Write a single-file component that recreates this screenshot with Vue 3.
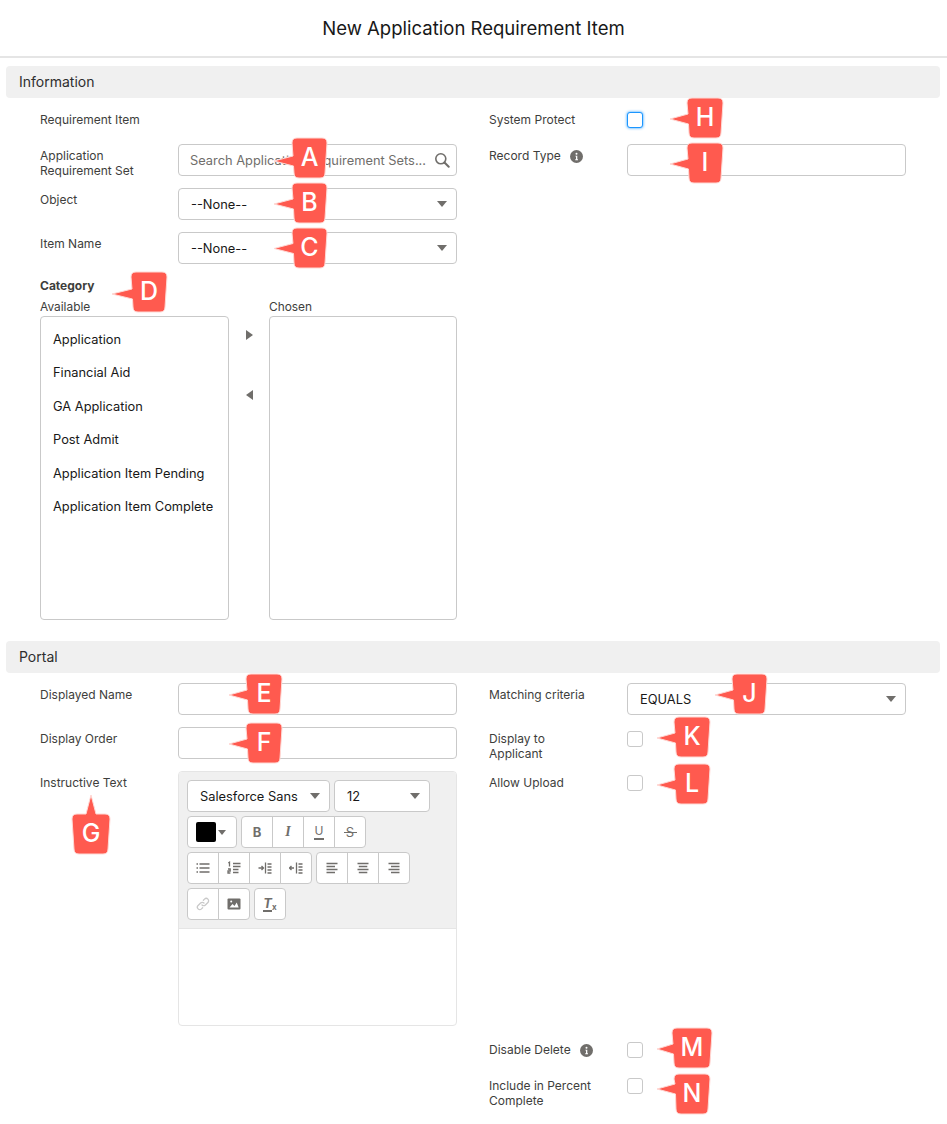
<script setup>
const categories = [
  'Application',
  'Financial Aid',
  'GA Application',
  'Post Admit',
  'Application Item Pending',
  'Application Item Complete',
]

const listIcons = [
  'M0.5 3h1.5M0.5 7h1.5M0.5 11h1.5M3.5 3h10M3.5 7h10M3.5 11h10',
  'M1.3 2l1.2-.8V5.5M1 8h2.2v2H1v2h2.4M6 2.5h7.5M6 5.5h7.5M6 8.5h5.5M6 11.5h5.5',
  'M0.5 7h4.5M3.5 5l2 2-2 2M7.5 1.5v11M9.5 3h4M9.5 6h4M9.5 9h4M9.5 12h4',
  'M0.5 7h4.5M2.5 5L.5 7l2 2M7.5 1.5v11M9.5 3h4M9.5 6h4M9.5 9h4M9.5 12h4',
]
const alignIcons = [
  'M1.5 2.5h11M1.5 5.5h8.5M1.5 8.5h11M1.5 11.5h8.5',
  'M1.5 2.5h11M2.8 5.5h8.5M1.5 8.5h11M2.8 11.5h8.5',
  'M1.5 2.5h11M4 5.5h8.5M1.5 8.5h11M4 11.5h8.5',
]

function shape(c) {
  const { l, r, t, b, tx, ty } = c
  const ins = 2
  const rad = 5
  const bl = l + ins
  const br = r - ins
  if (c.up) {
    return `M${l + rad} ${t}L${tx - 5} ${t}L${tx} ${ty}L${tx + 5} ${t}L${r - rad} ${t}Q${r} ${t} ${r} ${t + rad}L${br} ${b - rad}Q${br} ${b} ${br - rad} ${b}L${bl + rad} ${b}Q${bl} ${b} ${bl} ${b - rad}L${l} ${t + rad}Q${l} ${t} ${l + rad} ${t}Z`
  }
  return `M${l + rad} ${t}L${r - rad} ${t}Q${r} ${t} ${r} ${t + rad}L${br} ${b - rad}Q${br} ${b} ${br - rad} ${b}L${bl + rad} ${b}Q${bl} ${b} ${bl} ${b - rad}L${l + 1.5} ${ty + 5}L${tx} ${ty}L${l + 1} ${ty - 5}L${l} ${t + rad}Q${l} ${t} ${l + rad} ${t}Z`
}

const callouts = [
  { k: 'A', l: 292, r: 327, t: 138, b: 178, tx: 274, ty: 161 },
  { k: 'B', l: 292, r: 327, t: 183, b: 223, tx: 274, ty: 204 },
  { k: 'C', l: 292, r: 327, t: 228, b: 268, tx: 274, ty: 248.5 },
  { k: 'D', l: 131, r: 167, t: 272, b: 312, tx: 112, ty: 294 },
  { k: 'E', l: 246, r: 282, t: 674, b: 714, tx: 229, ty: 695 },
  { k: 'F', l: 246, r: 282, t: 723, b: 763, tx: 229, ty: 744 },
  { k: 'G', l: 72, r: 110, t: 814, b: 854, tx: 91, ty: 795, up: true },
  { k: 'H', l: 687, r: 723, t: 98, b: 138, tx: 670, ty: 119 },
  { k: 'I', l: 687, r: 723, t: 143, b: 183, tx: 670, ty: 164 },
  { k: 'J', l: 732, r: 767, t: 674, b: 714, tx: 715, ty: 695 },
  { k: 'K', l: 674, r: 710, t: 717, b: 757, tx: 657, ty: 738 },
  { k: 'L', l: 674, r: 710, t: 764, b: 804, tx: 657, ty: 785 },
  { k: 'M', l: 672, r: 712, t: 1028, b: 1068, tx: 657, ty: 1049 },
  { k: 'N', l: 674, r: 710, t: 1074, b: 1114, tx: 657, ty: 1089 },
].map((c) => ({ ...c, d: shape(c), cx: (c.l + c.r) / 2, base: (c.t + c.b) / 2 + 8 }))
</script>

<template>
  <div class="page">
    <header class="title-bar"><h1>New Application Requirement Item</h1></header>

    <section class="section">
      <h2 class="section-head">Information</h2>
      <div class="grid info">
        <div class="field short"><span class="label">Requirement Item</span></div>
        <div class="field short">
          <span class="label">System Protect</span>
          <input class="check focused" type="checkbox" />
        </div>

        <div class="field">
          <span class="label">Application Requirement Set</span>
          <div class="box search">
            <input class="bare" placeholder="Search Application Requirement Sets..." />
            <svg class="search-icon" width="16" height="16" viewBox="0 0 16 16" fill="none" stroke="#706e6b" stroke-width="1.6">
              <circle cx="6.8" cy="6.8" r="5" />
              <path d="M10.5 10.5l4.2 4.2" stroke-linecap="round" stroke-width="2" />
            </svg>
          </div>
        </div>
        <div class="field">
          <span class="label with-info">Record Type
            <svg class="info-icon" width="13" height="13" viewBox="0 0 13 13">
              <circle cx="6.5" cy="6.5" r="6.5" fill="#706e6b" />
              <circle cx="6.5" cy="3.8" r="1" fill="#fff" />
              <path d="M5.4 5.7h1.9v3.6h.7v.9H5.2v-.9h.8V6.6h-.6z" fill="#fff" />
            </svg>
          </span>
          <input class="box text" />
        </div>

        <div class="field col1">
          <span class="label">Object</span>
          <div class="box select"><span>--None--</span><i class="caret"></i></div>
        </div>
        <div class="field col1">
          <span class="label">Item Name</span>
          <div class="box select"><span>--None--</span><i class="caret"></i></div>
        </div>

        <div class="picker col1">
          <div class="picker-title">Category</div>
          <div class="picker-cols">
            <div class="picker-col left">
              <div class="picker-label">Available</div>
              <ul class="listbox">
                <li v-for="c in categories" :key="c">{{ c }}</li>
              </ul>
            </div>
            <div class="picker-arrows">
              <i class="tri right"></i>
              <i class="tri back"></i>
            </div>
            <div class="picker-col">
              <div class="picker-label">Chosen</div>
              <ul class="listbox"></ul>
            </div>
          </div>
        </div>
      </div>
    </section>

    <section class="section">
      <h2 class="section-head">Portal</h2>
      <div class="grid portal">
        <div class="field">
          <span class="label">Displayed Name</span>
          <input class="box text" />
        </div>
        <div class="field">
          <span class="label">Matching criteria</span>
          <div class="box select"><span>EQUALS</span><i class="caret"></i></div>
        </div>

        <div class="field">
          <span class="label">Display Order</span>
          <input class="box text" />
        </div>
        <div class="field">
          <span class="label narrow">Display to Applicant</span>
          <input class="check" type="checkbox" />
        </div>

        <div class="field editor-field">
          <span class="label">Instructive Text</span>
          <div class="editor">
            <div class="toolbar">
              <div class="tool-row">
                <div class="tool-select font"><span>Salesforce Sans</span><i class="caret"></i></div>
                <div class="tool-select size"><span>12</span><i class="caret"></i></div>
              </div>
              <div class="tool-row">
                <div class="tool-btn swatch-btn"><i class="swatch"></i><i class="caret small"></i></div>
                <div class="tool-group">
                  <span class="tool-btn t-b">B</span>
                  <span class="tool-btn t-i">I</span>
                  <span class="tool-btn t-u">U</span>
                  <span class="tool-btn t-s">S</span>
                </div>
              </div>
              <div class="tool-row">
                <div class="tool-group">
                  <span v-for="d in listIcons" :key="d" class="tool-btn">
                    <svg width="14" height="14" viewBox="0 0 14 14" fill="none" stroke="#706e6b" stroke-width="1.3"><path :d="d" /></svg>
                  </span>
                </div>
                <div class="tool-group">
                  <span v-for="d in alignIcons" :key="d" class="tool-btn">
                    <svg width="14" height="14" viewBox="0 0 14 14" fill="none" stroke="#706e6b" stroke-width="1.5"><path :d="d" /></svg>
                  </span>
                </div>
              </div>
              <div class="tool-row">
                <div class="tool-group">
                  <span class="tool-btn">
                    <svg width="14" height="14" viewBox="0 0 14 14" fill="none" stroke="#c9c9c9" stroke-width="1.3" stroke-linecap="round">
                      <path d="M6 8a2.4 2.4 0 0 0 3.4 0l2.5-2.5a2.4 2.4 0 0 0-3.4-3.4L7.4 3.2" />
                      <path d="M8 6a2.4 2.4 0 0 0-3.4 0L2.1 8.5a2.4 2.4 0 0 0 3.4 3.4l1.1-1.1" />
                    </svg>
                  </span>
                  <span class="tool-btn">
                    <svg width="14" height="14" viewBox="0 0 14 14">
                      <rect x="0.5" y="1.5" width="13" height="11" rx="1" fill="#706e6b" />
                      <path d="M2.5 10.5l3-3.5 2 2 2.2-3.5 2 5z" fill="#fff" />
                      <circle cx="4.2" cy="4.6" r="1" fill="#fff" />
                    </svg>
                  </span>
                </div>
                <div class="tool-group">
                  <span class="tool-btn t-clear">T<small>x</small></span>
                </div>
              </div>
            </div>
            <div class="editor-area"></div>
          </div>
        </div>
        <div class="field">
          <span class="label">Allow Upload</span>
          <input class="check" type="checkbox" />
        </div>

        <div class="field short col2">
          <span class="label with-info delete">Disable Delete
            <svg class="info-icon" width="13" height="13" viewBox="0 0 13 13">
              <circle cx="6.5" cy="6.5" r="6.5" fill="#706e6b" />
              <circle cx="6.5" cy="3.8" r="1" fill="#fff" />
              <path d="M5.4 5.7h1.9v3.6h.7v.9H5.2v-.9h.8V6.6h-.6z" fill="#fff" />
            </svg>
          </span>
          <input class="check" type="checkbox" />
        </div>
        <div class="field short col2">
          <span class="label narrow wide">Include in Percent Complete</span>
          <input class="check" type="checkbox" />
        </div>
      </div>
    </section>

    <svg class="callouts" width="947" height="1124" viewBox="0 0 947 1124">
      <g v-for="c in callouts" :key="c.k">
        <path :d="c.d" fill="#ff5a4f" stroke="#ffd9d5" stroke-width="1" stroke-linejoin="round" />
        <text :x="c.cx" :y="c.base" text-anchor="middle" class="callout-letter">{{ c.k }}</text>
      </g>
    </svg>
  </div>
</template>

<style>
html, body { margin: 0; background: #fff; }
</style>

<style scoped>
.page {
  position: relative;
  width: 947px;
  height: 1124px;
  overflow: hidden;
  font-family: Inter, "Liberation Sans", sans-serif;
  color: #181818;
  background: #fff;
}
.title-bar {
  height: 56px;
  display: flex;
  align-items: center;
  justify-content: center;
  border-bottom: 2px solid #e5e5e5;
  margin-bottom: 8px;
}
.title-bar h1 {
  margin: 0;
  font-size: 18.55px;
  font-weight: 400;
  line-height: 24px;
}
.section { margin: 0 7px 0 6px; }
.section-head {
  margin: 0;
  height: 32px;
  line-height: 32px;
  padding-left: 13px;
  background: #f0f0f0;
  border-radius: 4px;
  font-size: 14px;
  font-weight: 400;
  color: #2e2e2e;
}
.grid {
  display: grid;
  grid-template-columns: 417px 417px;
  column-gap: 32px;
  row-gap: 12px;
  margin-left: 34px;
  padding-top: 10px;
  align-items: start;
}
.info { padding-bottom: 21px; }
.col1 { grid-column: 1; }
.col2 { grid-column: 2; }
.field {
  display: grid;
  grid-template-columns: 138px 279px;
  min-height: 32px;
  align-items: start;
}
.field.short { min-height: 24px; }
.label {
  display: block;
  padding-top: 4px;
  margin-bottom: -4px;
  width: 110px;
  font-size: 12px;
  line-height: 15px;
  color: #3e3e3c;
}
.label.narrow { width: 100px; }
.label.wide { width: 120px; }
.with-info {
  display: flex;
  gap: 9px;
  width: 130px;
  white-space: nowrap;
}
.info-icon { flex: none; margin-top: 2px; }
.box {
  box-sizing: border-box;
  width: 279px;
  height: 32px;
  border: 1px solid #c9c9c9;
  border-radius: 4px;
  background: #fff;
  font: 12.85px/30px Inter, "Liberation Sans", sans-serif;
  color: #181818;
  outline: none;
}
.text { padding: 0 11px; }
.search { display: flex; align-items: center; padding: 1px 6px 0 11px; gap: 8px; }
.bare {
  flex: 1;
  min-width: 0;
  border: 0;
  padding: 0;
  outline: none;
  font: inherit;
  background: transparent;
  text-overflow: ellipsis;
}
.bare::placeholder { color: #706e6b; opacity: 1; }
.search-icon { flex: none; margin-top: -1px; }
.select {
  display: flex;
  align-items: center;
  justify-content: space-between;
  padding: 0 9px 0 12px;
}
.select span { padding-top: 1px; }
.caret {
  display: block;
  width: 0;
  height: 0;
  border-left: 5px solid transparent;
  border-right: 5px solid transparent;
  border-top: 6px solid #706e6b;
}
.caret.small { border-left-width: 4px; border-right-width: 4px; border-top-width: 5px; }
.check {
  appearance: none;
  -webkit-appearance: none;
  box-sizing: border-box;
  display: block;
  width: 16px;
  height: 16px;
  margin: 4px 0 0;
  border: 1px solid #c9c9c9;
  border-radius: 3px;
  background: #fff;
  outline: none;
}
.check.focused {
  border-color: #1b96ff;
  box-shadow: 0 0 3px #1b96ff;
}
.picker { margin-top: 2px; width: 417px; }
.picker-title {
  font-size: 12px;
  font-weight: 700;
  line-height: 15px;
  color: #3e3e3c;
  margin-bottom: 6px;
}
.picker-cols { display: flex; }
.picker-col { width: 188px; }
.picker-col.left { width: 189px; }
.picker-label {
  font-size: 11.9px;
  line-height: 15px;
  color: #3e3e3c;
  margin-bottom: 2px;
}
.listbox {
  box-sizing: border-box;
  height: 304px;
  margin: 0;
  padding: 6px 0 0 12px;
  list-style: none;
  border: 1px solid #c9c9c9;
  border-radius: 4px;
  font-size: 12.85px;
}
.listbox li {
  height: 33.4px;
  line-height: 33.4px;
  white-space: nowrap;
}
.picker-arrows {
  width: 40px;
  padding: 31px 0 0 17px;
  box-sizing: border-box;
  display: flex;
  flex-direction: column;
  gap: 50px;
}
.tri {
  display: block;
  width: 0;
  height: 0;
  border-top: 5px solid transparent;
  border-bottom: 5px solid transparent;
}
.tri.right { border-left: 7px solid #706e6b; }
.tri.back { border-right: 7px solid #706e6b; }
.editor {
  box-sizing: border-box;
  width: 279px;
  height: 255px;
  border: 1px solid #e5e5e5;
  border-radius: 4px;
  overflow: hidden;
  background: #fff;
  display: flex;
  flex-direction: column;
}
.toolbar {
  background: #f0f0f0;
  padding: 8px;
  display: flex;
  flex-direction: column;
  gap: 4px;
  border-bottom: 1px solid #e5e5e5;
}
.tool-row { display: flex; gap: 4px; height: 32px; }
.tool-select {
  box-sizing: border-box;
  display: flex;
  align-items: center;
  justify-content: space-between;
  height: 32px;
  padding: 0 9px 0 12px;
  border: 1px solid #c9c9c9;
  border-radius: 4px;
  background: #fff;
  font-size: 12.85px;
}
.tool-select.font { width: 143px; }
.tool-select.size { width: 96px; }
.tool-group { display: flex; }
.tool-btn {
  position: relative;
  box-sizing: border-box;
  display: flex;
  align-items: center;
  justify-content: center;
  width: 32px;
  height: 32px;
  margin-left: -1px;
  border: 1px solid #c9c9c9;
  background: #fff;
  color: #706e6b;
  font-size: 13px;
}
.tool-group .tool-btn:first-child { margin-left: 0; border-radius: 4px 0 0 4px; }
.tool-group .tool-btn:last-child { border-radius: 0 4px 4px 0; }
.tool-group .tool-btn:only-child { border-radius: 4px; }
.swatch-btn {
  width: 50px;
  margin-left: 0;
  border-radius: 4px;
  gap: 2px;
  justify-content: flex-start;
  padding-left: 8px;
}
.swatch { display: block; width: 20px; height: 20px; border-radius: 2px; background: #000; }
.t-b { font-weight: 700; font-size: 13px; }
.t-i { font-style: italic; font-weight: 700; font-family: "Liberation Serif", serif; font-size: 14px; }
.t-u { font-size: 12px; padding-bottom: 3px; }
.t-u::after {
  content: "";
  position: absolute;
  left: 10px;
  top: 21px;
  width: 10px;
  height: 1.5px;
  background: #706e6b;
}
.t-s { font-size: 13px; }
.t-s::after {
  content: "";
  position: absolute;
  left: 8.5px;
  top: 14.5px;
  width: 13px;
  height: 1.3px;
  background: #706e6b;
}
.t-clear { font-style: italic; font-weight: 700; font-size: 13px; color: #706e6b; padding-bottom: 3px; }
.t-clear::after {
  content: "";
  position: absolute;
  left: 8px;
  top: 21px;
  width: 9px;
  height: 1.5px;
  background: #706e6b;
}
.t-clear small { font-size: 8px; font-style: normal; margin-top: 9px; }
.editor-area { flex: 1; }
.callouts { position: absolute; left: 0; top: 0; pointer-events: none; }
.callout-letter {
  fill: #fff;
  font-family: Inter, "Liberation Sans", sans-serif;
  font-size: 25px;
  font-weight: 500;
}
</style>
